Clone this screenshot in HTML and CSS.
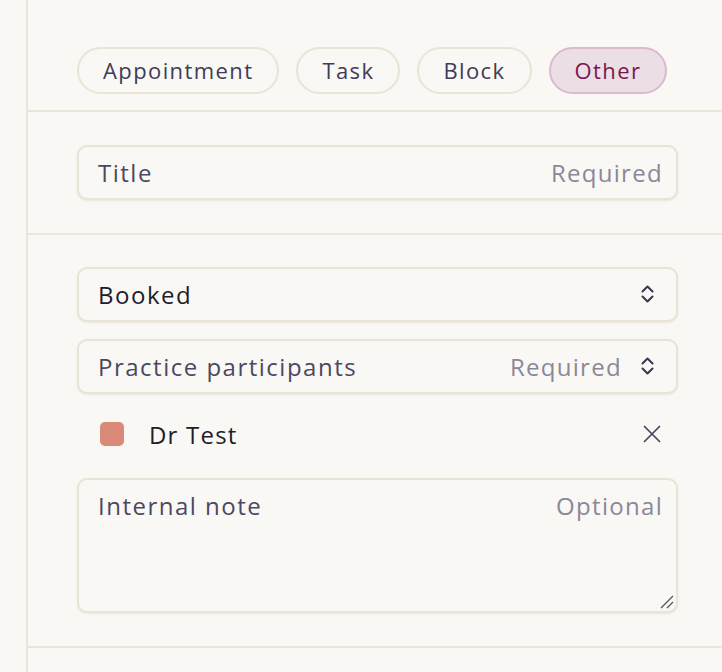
FILE: index.html
```html
<!DOCTYPE html>
<html>
<head>
<meta charset="utf-8">
<link rel="stylesheet" href="styles.css">
</head>
<body>
<div class="panel">
  <section class="section types">
    <button class="pill">Appointment</button>
    <button class="pill">Task</button>
    <button class="pill">Block</button>
    <button class="pill active">Other</button>
  </section>
  <section class="section title-sec">
    <div class="field">
      <span class="label">Title</span>
      <span class="hint">Required</span>
    </div>
  </section>
  <section class="section stack">
    <div class="field select">
      <span class="value">Booked</span>
      <svg class="chev" width="13" height="18" viewBox="0 0 13 18"><path d="M1.5 6.5 L6.5 1.5 L11.5 6.5 M1.5 11.5 L6.5 16.5 L11.5 11.5" fill="none" stroke="#3b3750" stroke-width="2" stroke-linecap="round" stroke-linejoin="round"/></svg>
    </div>
    <div class="field select">
      <span class="label">Practice participants</span>
      <span class="hint with-icon">Required</span>
      <svg class="chev" width="13" height="18" viewBox="0 0 13 18"><path d="M1.5 6.5 L6.5 1.5 L11.5 6.5 M1.5 11.5 L6.5 16.5 L11.5 11.5" fill="none" stroke="#3b3750" stroke-width="2" stroke-linecap="round" stroke-linejoin="round"/></svg>
    </div>
    <div class="person">
      <span class="swatch"></span>
      <span class="name">Dr Test</span>
      <svg class="close" width="18" height="18" viewBox="0 0 18 18"><path d="M1.5 1.5 L16.5 16.5 M16.5 1.5 L1.5 16.5" fill="none" stroke="#4a4560" stroke-width="1.7" stroke-linecap="round"/></svg>
    </div>
    <div class="field area">
      <span class="label">Internal note</span>
      <span class="hint">Optional</span>
      <svg class="grip" width="14" height="14" viewBox="0 0 14 14"><path d="M1 13 L13 1 M7 13 L13 7" stroke="#5a5a5a" stroke-width="1.4"/></svg>
    </div>
  </section>
  <section class="section last"></section>
</div>
</body>
</html>
```
FILE: styles.css
```css
html, body {
  margin: 0;
  padding: 0;
  background: #f9f8f4;
  font-family: "Open Sans", "Liberation Sans", sans-serif;
}
.panel {
  margin-left: 26px;
  border-left: 2px solid #ece5da;
  min-height: 672px;
  box-sizing: border-box;
}
.section {
  padding: 0 44px 0 49px;
  border-bottom: 2px solid #ece5da;
}
.types {
  display: flex;
  gap: 17px;
  padding-top: 47px;
  padding-bottom: 16px;
}
.pill {
  height: 47px;
  padding: 0 24px 2px 24px;
  border-radius: 24px;
  border: 2px solid #ebe3d5;
  background: #f9f8f4;
  color: #403b58;
  font-family: inherit;
  font-size: 22px;
  letter-spacing: 1.4px;
  box-sizing: border-box;
}
.pill.active {
  background: #ebdee4;
  border-color: #dbb9cf;
  color: #78174f;
}
.title-sec {
  padding-top: 33px;
  padding-bottom: 33px;
}
.field {
  display: flex;
  align-items: center;
  height: 55px;
  padding: 0 13px 1px 19px;
  border: 2px solid #ebe3d5;
  border-radius: 10px;
  box-sizing: border-box;
  background: #f9f8f4;
  box-shadow: 0 1px 2px rgba(150, 130, 100, 0.14);
  font-size: 24px;
  letter-spacing: 1.5px;
  position: relative;
}
.field.select { padding-right: 22px; }
.label { color: #4d4862; flex: 1; }
.value { color: #1f1d2b; flex: 1; }
.hint { color: #8b8799; letter-spacing: 1.3px; }
.hint.with-icon { margin-right: 19px; }
.stack {
  display: flex;
  flex-direction: column;
  gap: 17px;
  padding-top: 32px;
  padding-bottom: 33px;
}
.person {
  display: flex;
  align-items: center;
  height: 46px;
  margin-bottom: 4px;
  padding: 0 17px 0 23px;
  font-size: 24px;
  letter-spacing: 1.2px;
  color: #1f1d2b;
}
.swatch {
  width: 24px;
  height: 24px;
  border-radius: 5px;
  background: #d98a78;
  margin-right: 25px;
}
.name { flex: 1; }
.field.area {
  height: 135px;
  align-items: flex-start;
  padding-top: 9px;
}
.grip {
  position: absolute;
  right: 2px;
  bottom: 2px;
}
.last { border-bottom: none; }
```
